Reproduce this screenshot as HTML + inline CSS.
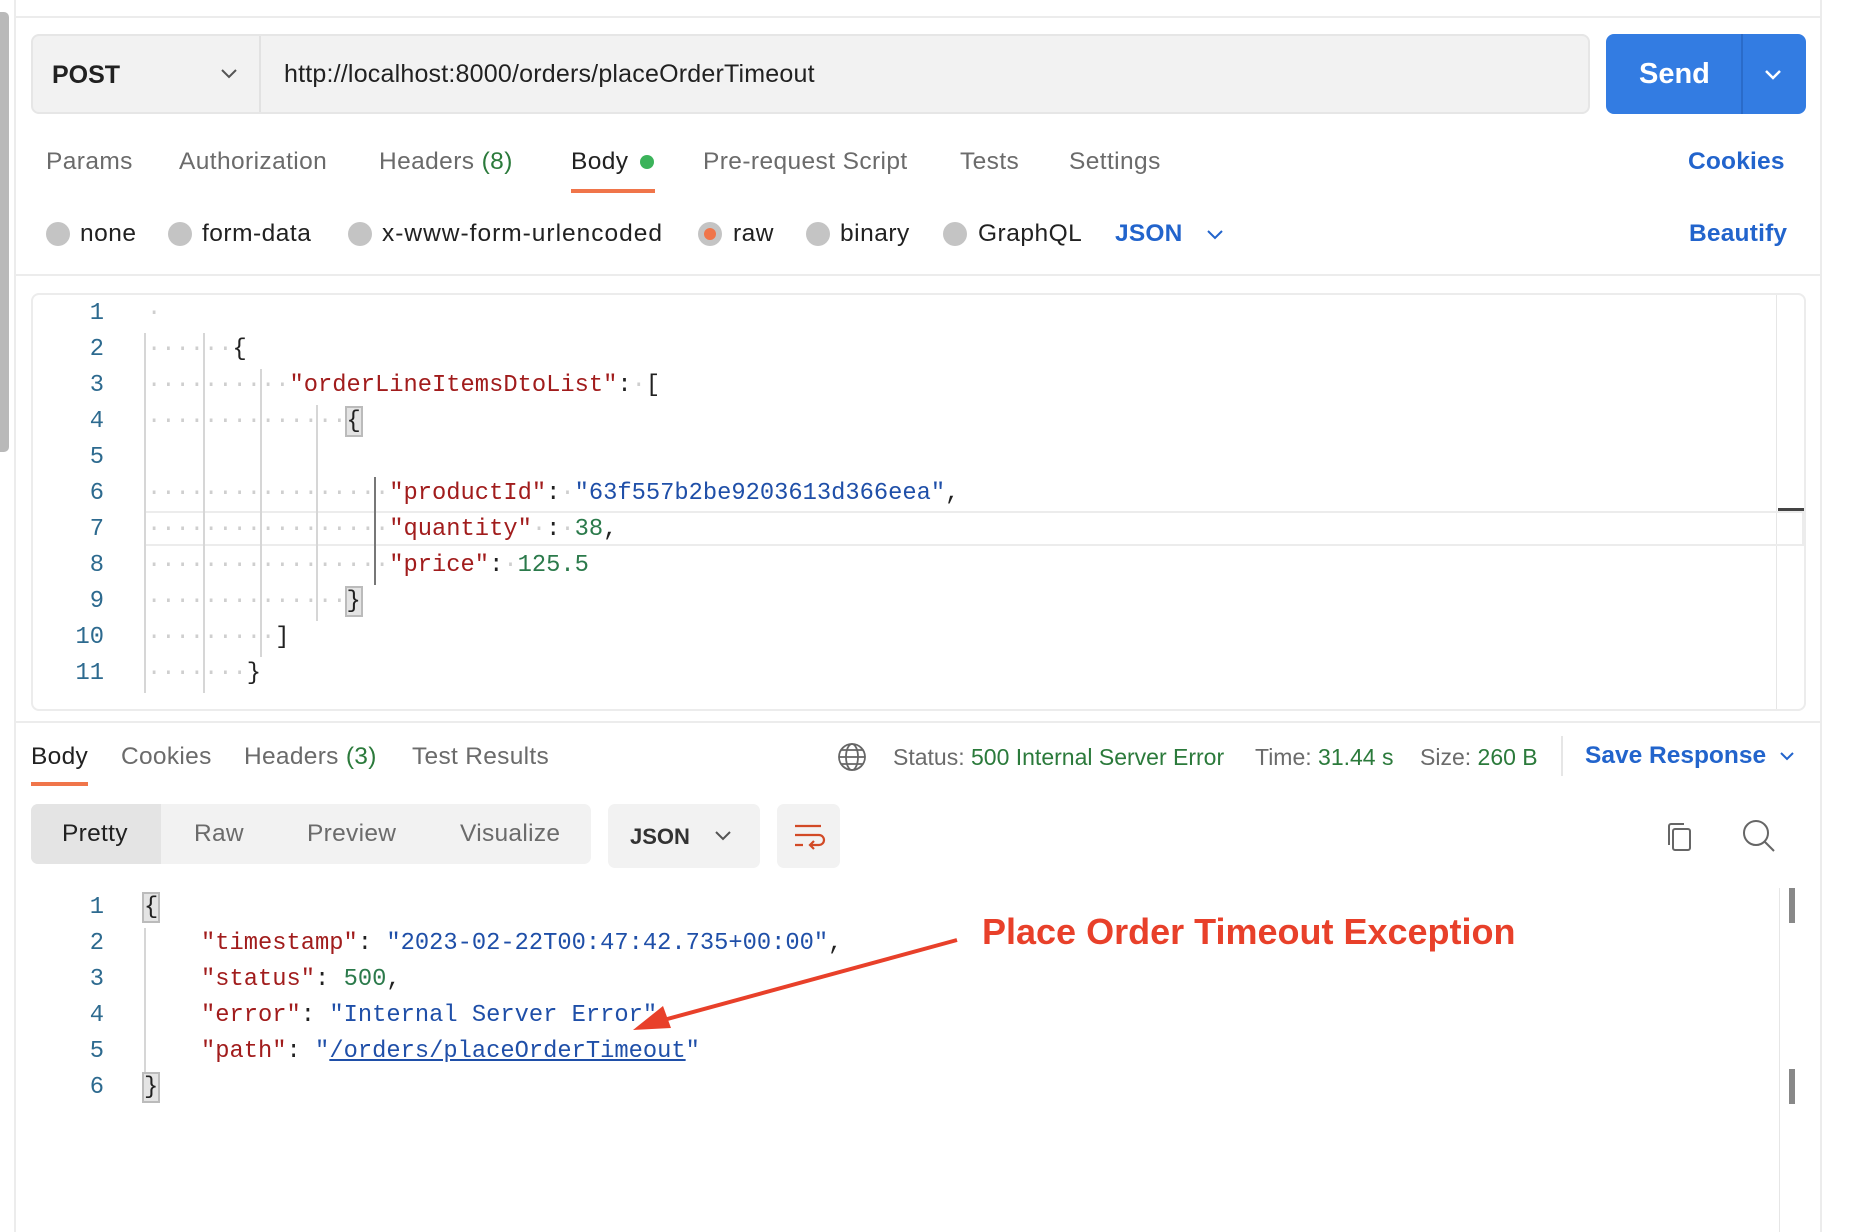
<!DOCTYPE html>
<html><head><meta charset="utf-8"><style>
*{margin:0;padding:0;box-sizing:border-box}
body{width:1856px;height:1232px;background:#fff;position:relative;overflow:hidden;font-family:"Liberation Sans",sans-serif;color:#212121}
.a{position:absolute;white-space:pre}
.t{font-size:24.5px;letter-spacing:0.4px;color:#6b6b6b;top:148px}
.r{font-size:24.5px;letter-spacing:0.5px;color:#212121;top:220px}
.rad{position:absolute;width:24px;height:24px;border-radius:50%;background:#c4c4c4;top:222px}
.mono{font-family:"Liberation Mono",monospace;font-size:23.75px;line-height:36px;height:36px}
.ln{position:absolute;width:60px;text-align:right;color:#2d6a8f;left:44px}
.d{color:#cfcfcf}
.k{color:#a11c1c}.s{color:#1f4fa8}.n{color:#2b7a4b}
.g{position:absolute;width:2px;background:#d6d6d6}
</style></head><body>
<div class="a" style="left:0;top:12px;width:9px;height:440px;background:#b9b9b9;border-radius:0 5px 5px 0"></div>
<div class="a" style="left:14px;top:0;width:2px;height:1232px;background:#ececec"></div>
<div class="a" style="left:1820px;top:0;width:2px;height:1232px;background:#ececec"></div>
<div class="a" style="left:16px;top:16px;width:1804px;height:2px;background:#ececec"></div>
<div class="a" style="left:1851px;top:52px;font-size:20px;color:#555">⋮</div>

<div class="a" style="left:31px;top:34px;width:1559px;height:80px;background:#f2f2f2;border:2px solid #e6e6e6;border-radius:8px"></div>
<div class="a" style="left:259px;top:36px;width:2px;height:76px;background:#e2e2e2"></div>
<div class="a" style="left:52px;top:61px;font-size:25px;font-weight:bold;color:#212121">POST</div>
<svg class="a" style="left:220px;top:67px" width="18" height="14"><path d="M2 3l7 7 7-7" stroke="#555" stroke-width="2" fill="none"/></svg>
<div class="a" style="left:284px;top:60px;font-size:25px;letter-spacing:0.2px;color:#212121">http://localhost:8000/orders/placeOrderTimeout</div>
<div class="a" style="left:1606px;top:34px;width:200px;height:80px;background:#337ce2;border-radius:8px"></div>
<div class="a" style="left:1741px;top:34px;width:2px;height:80px;background:#2a6bc9"></div>
<div class="a" style="left:1639px;top:58px;font-size:29px;font-weight:bold;color:#fff">Send</div>
<svg class="a" style="left:1763px;top:68px" width="20" height="14"><path d="M3 3l7 7 7-7" stroke="#fff" stroke-width="2.5" fill="none"/></svg>

<div class="a t" style="left:46px">Params</div>
<div class="a t" style="left:179px">Authorization</div>
<div class="a t" style="left:379px">Headers <span style="color:#2b7a3b">(8)</span></div>
<div class="a t" style="left:571px;color:#212121">Body</div>
<div class="a" style="left:640px;top:155px;width:14px;height:14px;border-radius:50%;background:#3bb35a"></div>
<div class="a" style="left:571px;top:189px;width:84px;height:4px;background:#f0754a"></div>
<div class="a t" style="left:703px">Pre-request Script</div>
<div class="a t" style="left:960px">Tests</div>
<div class="a t" style="left:1069px">Settings</div>
<div class="a t" style="left:1688px;color:#2264cc;font-weight:bold;letter-spacing:0.2px">Cookies</div>

<div class="rad" style="left:46px"></div><div class="a r" style="left:80px">none</div>
<div class="rad" style="left:168px"></div><div class="a r" style="left:202px">form-data</div>
<div class="rad" style="left:348px"></div><div class="a r" style="left:382px;letter-spacing:1px">x-www-form-urlencoded</div>
<div class="rad" style="left:698px"></div><div class="a" style="left:704px;top:228px;width:12px;height:12px;border-radius:50%;background:#f0754a"></div><div class="a r" style="left:733px">raw</div>
<div class="rad" style="left:806px"></div><div class="a r" style="left:840px">binary</div>
<div class="rad" style="left:943px"></div><div class="a r" style="left:978px">GraphQL</div>
<div class="a r" style="left:1115px;color:#2264cc;font-weight:bold;letter-spacing:0.2px">JSON</div>
<svg class="a" style="left:1206px;top:229px" width="18" height="12"><path d="M2 2l7 7 7-7" stroke="#2264cc" stroke-width="2" fill="none"/></svg>
<div class="a r" style="left:1689px;color:#2264cc;font-weight:bold;letter-spacing:0.2px">Beautify</div>
<div class="a" style="left:16px;top:274px;width:1804px;height:2px;background:#ececec"></div>

<div class="a" style="left:31px;top:293px;width:1775px;height:418px;border:2px solid #ececec;border-radius:8px"></div>
<div class="a" style="left:1776px;top:295px;width:1px;height:414px;background:#e6e6e6"></div>
<div class="a" style="left:1778px;top:508px;width:26px;height:3px;background:#444"></div>
<div class="a" style="left:144px;top:511px;width:1660px;height:35px;border:2px solid #ececec"></div>
<div class="g" style="left:144px;top:333px;height:360px"></div>
<div class="g" style="left:203px;top:333px;height:360px"></div>
<div class="g" style="left:260px;top:369px;height:288px"></div>
<div class="g" style="left:316px;top:405px;height:216px"></div>
<div class="a" style="left:374px;top:477px;width:2px;height:108px;background:#777"></div>

<div class="mono">
<div class="ln a mono" style="top:296px">1</div>
<div class="ln a mono" style="top:332px">2</div>
<div class="ln a mono" style="top:368px">3</div>
<div class="ln a mono" style="top:404px">4</div>
<div class="ln a mono" style="top:440px">5</div>
<div class="ln a mono" style="top:476px">6</div>
<div class="ln a mono" style="top:512px">7</div>
<div class="ln a mono" style="top:548px">8</div>
<div class="ln a mono" style="top:584px">9</div>
<div class="ln a mono" style="top:620px">10</div>
<div class="ln a mono" style="top:656px">11</div>
<div class="a mono" style="left:147px;top:296px"><span class="d">·</span></div>
<div class="a mono" style="left:147px;top:332px"><span class="d">······</span>{</div>
<div class="a mono" style="left:147px;top:368px"><span class="d">··········</span><span class="k">"orderLineItemsDtoList"</span>:<span class="d">·</span>[</div>
<div class="a mono" style="left:147px;top:404px"><span class="d">··············</span><span style="background:#e4e4e4;outline:2px solid #bbb">{</span></div>
<div class="a mono" style="left:147px;top:476px"><span class="d">·················</span><span class="k">"productId"</span>:<span class="d">·</span><span class="s">"63f557b2be9203613d366eea"</span>,</div>
<div class="a mono" style="left:147px;top:512px"><span class="d">·················</span><span class="k">"quantity"</span><span class="d">·</span>:<span class="d">·</span><span class="n">38</span>,</div>
<div class="a mono" style="left:147px;top:548px"><span class="d">·················</span><span class="k">"price"</span>:<span class="d">·</span><span class="n">125.5</span></div>
<div class="a mono" style="left:147px;top:584px"><span class="d">··············</span><span style="background:#e4e4e4;outline:2px solid #bbb">}</span></div>
<div class="a mono" style="left:147px;top:620px"><span class="d">·········</span>]</div>
<div class="a mono" style="left:147px;top:656px"><span class="d">·······</span>}</div>
</div>

<div class="a" style="left:16px;top:721px;width:1804px;height:2px;background:#ececec"></div>
<div class="a" style="left:31px;top:743px;font-size:24.5px;letter-spacing:0.3px;color:#212121">Body</div>
<div class="a" style="left:31px;top:782px;width:57px;height:4px;background:#f0754a"></div>
<div class="a" style="left:121px;top:743px;font-size:24.5px;letter-spacing:0.3px;color:#6b6b6b">Cookies</div>
<div class="a" style="left:244px;top:743px;font-size:24.5px;letter-spacing:0.3px;color:#6b6b6b">Headers <span style="color:#2b7a3b">(3)</span></div>
<div class="a" style="left:412px;top:743px;font-size:24.5px;letter-spacing:0.3px;color:#6b6b6b">Test Results</div>
<svg class="a" style="left:837px;top:742px" width="30" height="30" viewBox="0 0 30 30"><g stroke="#666" stroke-width="1.8" fill="none"><circle cx="15" cy="15" r="13"/><ellipse cx="15" cy="15" rx="6" ry="13"/><path d="M2 15h26M4 8h22M4 22h22"/></g></svg>
<div class="a" style="left:893px;top:744px;font-size:23px;color:#6b6b6b">Status: <span style="color:#2b7a3b">500 Internal Server Error</span></div>
<div class="a" style="left:1255px;top:744px;font-size:23px;color:#6b6b6b">Time: <span style="color:#2b7a3b">31.44 s</span></div>
<div class="a" style="left:1420px;top:744px;font-size:23px;color:#6b6b6b">Size: <span style="color:#2b7a3b">260 B</span></div>
<div class="a" style="left:1561px;top:736px;width:2px;height:40px;background:#e6e6e6"></div>
<div class="a" style="left:1585px;top:742px;font-size:24.5px;font-weight:bold;color:#2264cc">Save Response</div>
<svg class="a" style="left:1779px;top:751px" width="16" height="12"><path d="M2 2l6 6 6-6" stroke="#2264cc" stroke-width="2" fill="none"/></svg>

<div class="a" style="left:31px;top:804px;width:560px;height:60px;background:#f2f2f2;border-radius:7px"></div>
<div class="a" style="left:31px;top:804px;width:130px;height:60px;background:#e4e4e4;border-radius:7px 0 0 7px"></div>
<div class="a" style="left:62px;top:820px;font-size:24.5px;letter-spacing:0.3px;color:#212121">Pretty</div>
<div class="a" style="left:194px;top:820px;font-size:24.5px;letter-spacing:0.3px;color:#6b6b6b">Raw</div>
<div class="a" style="left:307px;top:820px;font-size:24.5px;letter-spacing:0.3px;color:#6b6b6b">Preview</div>
<div class="a" style="left:460px;top:820px;font-size:24.5px;letter-spacing:0.3px;color:#6b6b6b">Visualize</div>
<div class="a" style="left:608px;top:804px;width:152px;height:64px;background:#f2f2f2;border-radius:7px"></div>
<div class="a" style="left:630px;top:824px;font-size:22px;font-weight:bold;color:#333">JSON</div>
<svg class="a" style="left:714px;top:830px" width="18" height="12"><path d="M2 2l7 7 7-7" stroke="#555" stroke-width="2" fill="none"/></svg>
<div class="a" style="left:777px;top:804px;width:63px;height:64px;background:#f2f2f2;border-radius:7px"></div>
<svg class="a" style="left:792px;top:822px" width="34" height="30" viewBox="0 0 34 30"><g stroke="#d24a26" stroke-width="2.2" fill="none"><path d="M3 4h26M3 13h24a5 5 0 0 1 0 10h-8M22 19l-4 4 4 4M3 23h8"/></g></svg>
<svg class="a" style="left:1664px;top:820px" width="30" height="34" viewBox="0 0 30 34"><g stroke="#666" stroke-width="2" fill="none"><rect x="9" y="9" width="17" height="21" rx="2"/><path d="M5 25V6a2 2 0 0 1 2-2h13"/></g></svg>
<svg class="a" style="left:1741px;top:818px" width="36" height="36" viewBox="0 0 36 36"><g stroke="#666" stroke-width="2" fill="none"><circle cx="15" cy="15" r="12"/><path d="M24 24l9 9"/></g></svg>

<div class="a" style="left:1779px;top:888px;width:1px;height:344px;background:#e6e6e6"></div>
<div class="a" style="left:1789px;top:888px;width:6px;height:35px;background:#888"></div>
<div class="a" style="left:1789px;top:1069px;width:6px;height:35px;background:#888"></div>
<div class="g" style="left:144px;top:928px;height:144px"></div>

<div class="mono">
<div class="ln a mono" style="top:890px">1</div>
<div class="ln a mono" style="top:926px">2</div>
<div class="ln a mono" style="top:962px">3</div>
<div class="ln a mono" style="top:998px">4</div>
<div class="ln a mono" style="top:1034px">5</div>
<div class="ln a mono" style="top:1070px">6</div>
<div class="a mono" style="left:144px;top:890px"><span style="background:#e4e4e4;outline:2px solid #bbb">{</span></div>
<div class="a mono" style="left:144px;top:926px">    <span class="k">"timestamp"</span>: <span class="s">"2023-02-22T00:47:42.735+00:00"</span>,</div>
<div class="a mono" style="left:144px;top:962px">    <span class="k">"status"</span>: <span class="n">500</span>,</div>
<div class="a mono" style="left:144px;top:998px">    <span class="k">"error"</span>: <span class="s">"Internal Server Error"</span>,</div>
<div class="a mono" style="left:144px;top:1034px">    <span class="k">"path"</span>: <span class="s">"<span style="text-decoration:underline">/orders/placeOrderTimeout</span>"</span></div>
<div class="a mono" style="left:144px;top:1070px"><span style="background:#e4e4e4;outline:2px solid #bbb">}</span></div>
</div>

<svg class="a" style="left:0;top:0" width="1856" height="1232"><path d="M957 940L660 1021" stroke="#e8402a" stroke-width="4"/><path d="M633 1030l30-24 8 22z" fill="#e8402a"/></svg>
<div class="a" style="left:982px;top:911px;font-size:36px;font-weight:bold;color:#e8402a">Place Order Timeout Exception</div>
</body></html>
